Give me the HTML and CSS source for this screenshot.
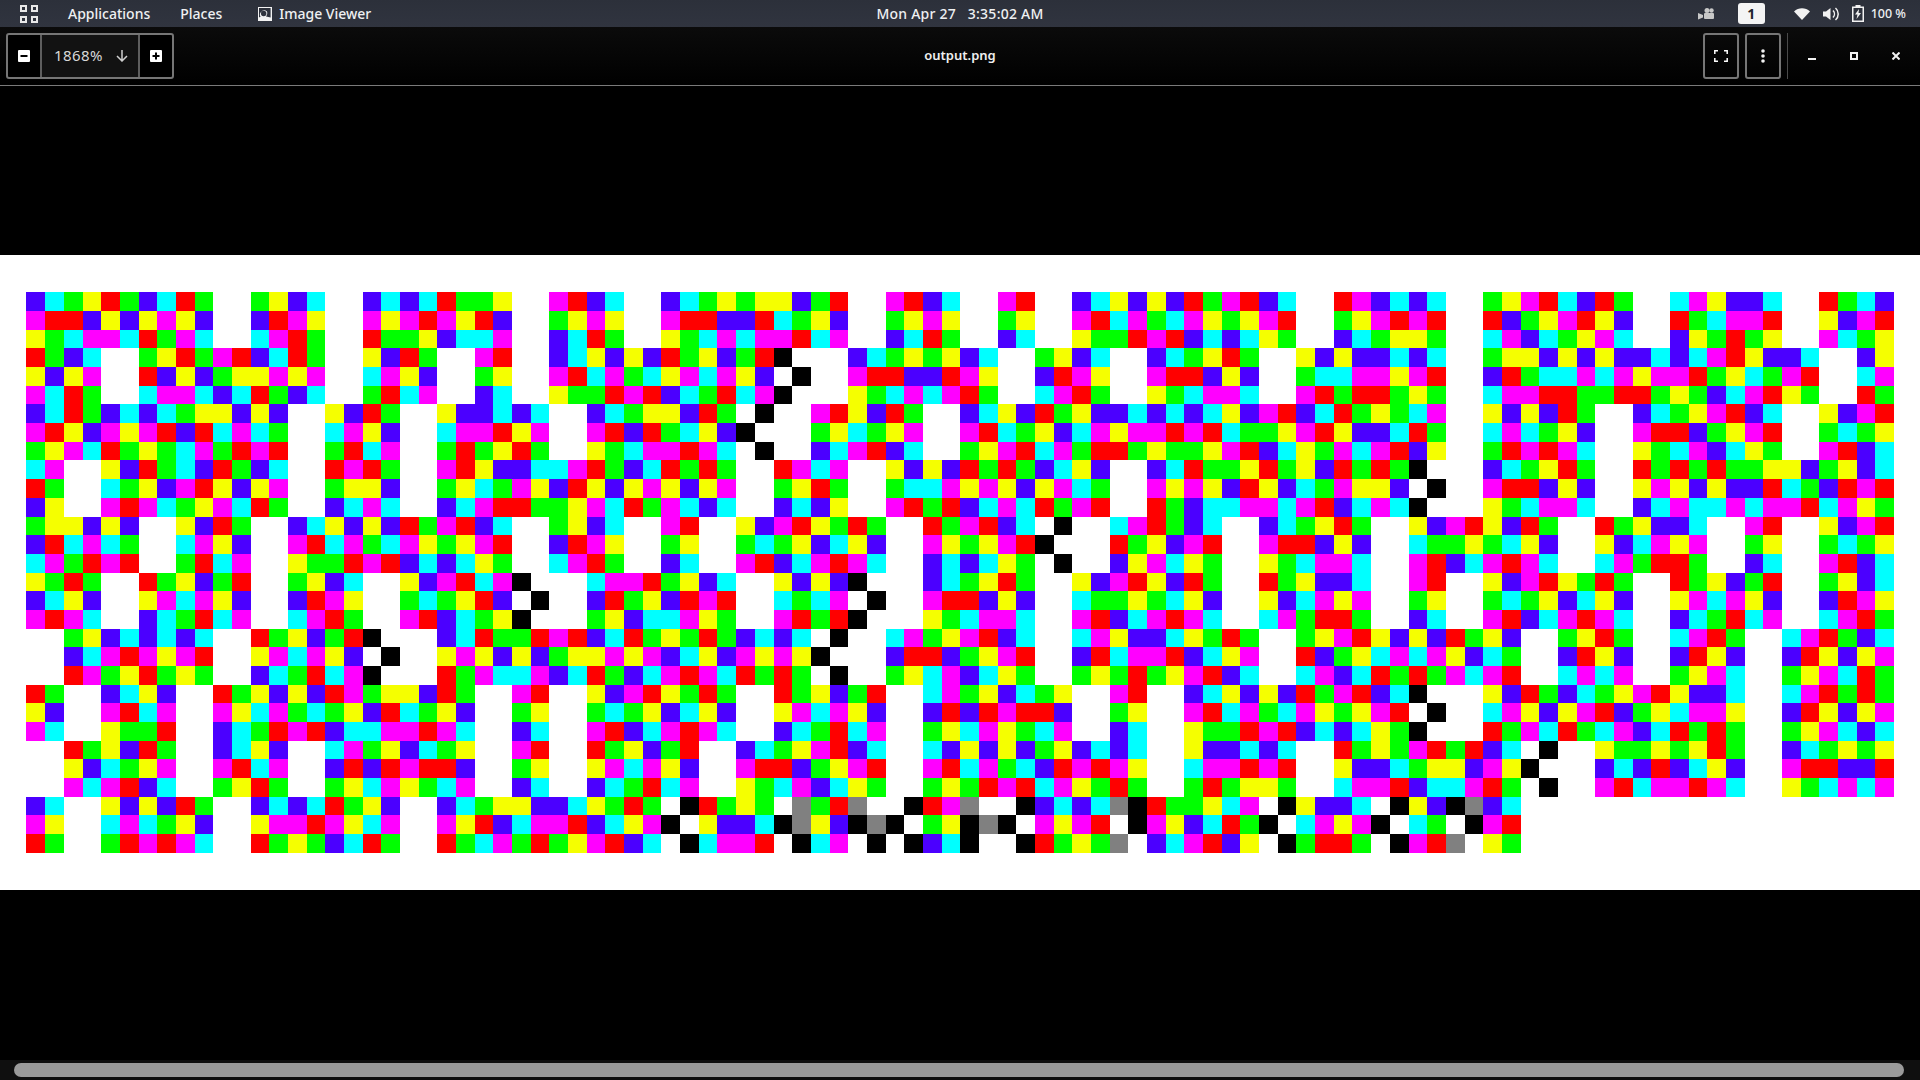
FILE: index.html
```html
<!DOCTYPE html>
<html lang="en">
<head>
<meta charset="utf-8">
<title>output.png</title>
<link rel="stylesheet" href="styles.css">
</head>
<body>
<div class="desktop">
  <header class="topbar">
    <div class="topbar-left">
      <svg class="activities" width="18" height="18" viewBox="0 0 18 18" fill="none" stroke="#e8e8e8" stroke-width="2"><rect x="1" y="1" width="5" height="5"/><rect x="12" y="1" width="5" height="5"/><rect x="1" y="12" width="5" height="5"/><rect x="12" y="12" width="5" height="5"/></svg>
      <span class="menu-item applications">Applications</span>
      <span class="menu-item places">Places</span>
      <svg class="app-icon" width="14" height="14" viewBox="0 0 14 14"><path fill="#f2f2f2" fill-rule="evenodd" d="M0 0h14v14H0zM1 1v9.5c.6-.3 1.2-.5 1.6-.7A4.2 4.2 0 0 1 9 4.5c.6 1.5.3 3.5-1 5l4.600 1V1zM3 6.500a2.700 2.700 0 0 0 2.700 2.800A2.700 2.700 0 0 0 8.400 6.500 2.700 2.700 0 0 0 5.700 3.800 2.700 2.700 0 0 0 3 6.500z"/></svg>
      <span class="menu-item">Image Viewer</span>
    </div>
    <div class="clock">Mon Apr 27 &nbsp; 3:35:02 AM</div>
    <div class="topbar-right">
      <svg class="tray-cam" width="16" height="14" viewBox="0 0 16 14" fill="#c8c8c8"><circle cx="9" cy="3.500" r="2.500"/><circle cx="13.500" cy="3.500" r="2.200"/><rect x="6" y="6" width="10" height="6" rx="1"/><path d="M0 6l5 2v2.500l-5 2z"/></svg>
      <span class="workspace">1</span>
      <svg class="tray-wifi" width="16" height="12" viewBox="0 0 16 12"><path fill="#f2f2f2" d="M0 3.500C4.500-.8 11.500-.8 16 3.500L8 12z"/></svg>
      <svg class="tray-vol" width="16" height="14" viewBox="0 0 16 14" fill="none"><path fill="#f2f2f2" d="M0 4.500h3L7.500 1v12L3 9.500H0z"/><path stroke="#f2f2f2" stroke-width="1.500" d="M10 3.500a5 5 0 0 1 0 7M12.500 1a8 8 0 0 1 0 12"/></svg>
      <svg class="tray-bat" width="12" height="17" viewBox="0 0 12 17"><path fill="#f2f2f2" fill-rule="evenodd" d="M3.500 0h5v1.500H12V17H0V1.500h3.500zM1.500 3v12.500h9V3z"/><path fill="#f2f2f2" d="M7 4L3 9.500h2.500L4.500 14 9 8H6.500z"/></svg>
      <span class="battery-text">100 %</span>
    </div>
  </header>

  <div class="headerbar">
    <div class="zoom-group">
      <button class="zoom-btn">
        <svg width="12" height="12" viewBox="0 0 12 12"><path fill="#fff" fill-rule="evenodd" d="M1 0h10a1 1 0 0 1 1 1v10a1 1 0 0 1-1 1H1a1 1 0 0 1-1-1V1a1 1 0 0 1 1-1zM2.500 5v2h7V5z"/></svg>
      </button>
      <div class="zoom-level">
        <span class="zoom-value">1868%</span>
        <svg width="12" height="12" viewBox="0 0 12 12" fill="none" stroke="#cfcfcf" stroke-width="1.500"><path d="M6 0v11M1 6l5 5 5-5"/></svg>
      </div>
      <button class="zoom-btn">
        <svg width="12" height="12" viewBox="0 0 12 12"><path fill="#fff" fill-rule="evenodd" d="M1 0h10a1 1 0 0 1 1 1v10a1 1 0 0 1-1 1H1a1 1 0 0 1-1-1V1a1 1 0 0 1 1-1zM5 2.500V5H2.500v2H5v2.500h2V7h2.500V5H7V2.500z"/></svg>
      </button>
    </div>
    <div class="title">output.png</div>
    <div class="header-actions">
      <button class="tool-btn">
        <svg width="14" height="12" viewBox="0 0 14 12" fill="none" stroke="#fff" stroke-width="1.500"><path d="M.8 4V.8H4M10 .8h3.200V4M13.200 8v3.200H10M4 11.200H.8V8"/></svg>
      </button>
      <button class="tool-btn">
        <svg width="4" height="14" viewBox="0 0 4 14" fill="#f2f2f2"><circle cx="2" cy="2" r="1.800"/><circle cx="2" cy="7" r="1.800"/><circle cx="2" cy="12" r="1.800"/></svg>
      </button>
      <span class="header-sep"></span>
      <div class="window-controls">
        <svg width="8" height="8" viewBox="0 0 8 8"><rect y="6" width="8" height="2" fill="#f2f2f2"/></svg>
        <svg width="8" height="8" viewBox="0 0 8 8" fill="none" stroke="#f2f2f2" stroke-width="2"><rect x="1" y="1" width="6" height="6"/></svg>
        <svg width="8" height="8" viewBox="0 0 8 8" fill="none" stroke="#f2f2f2" stroke-width="2"><path d="M.5.5l7 7M7.500.5l-7 7"/></svg>
      </div>
    </div>
  </div>

  <main class="viewer">
    <canvas id="picture" class="picture" width="1920" height="635"></canvas>
  </main>

  <div class="scrollbar"><div class="scroll-thumb"></div></div>
</div>
<script src="image.js"></script>
</body>
</html>
```
FILE: styles.css
```css
* { box-sizing: border-box; }
html, body { margin: 0; height: 100%; background: #000; overflow: hidden; }
body { font-family: "Noto Sans", "Open Sans", sans-serif; color: #f2f2f2; }

.desktop { display: flex; flex-direction: column; height: 1080px; width: 1920px; }

.topbar {
  height: 27px;
  flex: none;
  display: grid;
  grid-template-columns: 1fr auto 1fr;
  align-items: center;
  background: linear-gradient(#2c303a, #30343f);
  font-size: 14px;
  font-weight: 500;
  color: #eef0f2;
}
.topbar-left { display: flex; align-items: center; padding-left: 20px; }
.activities { margin-right: 30px; }
.applications { margin-right: 30px; }
.places { margin-right: 36px; }
.app-icon { margin-right: 7px; }
.menu-item { white-space: nowrap; }
.clock { white-space: pre; letter-spacing: .25px; }
.topbar-right { display: flex; align-items: center; justify-content: flex-end; padding-right: 14px; }
.tray-cam { margin-right: 24px; }
.workspace {
  width: 27px; height: 21px; margin-right: 29px;
  background: #f4f4f4; color: #22252c; border-radius: 3px;
  font-weight: 700; font-size: 14px; text-align: center; line-height: 21px;
}
.tray-wifi { margin-right: 13px; }
.tray-vol { margin-right: 13px; }
.tray-bat { margin-right: 7px; }
.battery-text { font-size: 12.500px; white-space: nowrap; }

.headerbar {
  height: 59px;
  flex: none;
  display: grid;
  grid-template-columns: 1fr auto 1fr;
  align-items: center;
  background: linear-gradient(#0b0b0b, #000);
  border-bottom: 1px solid #7a7a7a;
  font-size: 15px;
}
.zoom-group {
  display: flex; width: 168px; height: 46px; margin-left: 6px;
  border: 2px solid #767676; border-radius: 3px;
  justify-self: start; background: #000;
}
button { font: inherit; color: inherit; background: none; padding: 0; display: flex; align-items: center; justify-content: center; }
.zoom-btn { width: 32px; border: 0; }
.zoom-level {
  flex: 1; display: flex; align-items: center; justify-content: space-between;
  padding: 0 10px 0 12px;
  background: #121212; color: #d8d8d8;
  border-left: 2px solid #5e5e5e; border-right: 2px solid #5e5e5e;
  letter-spacing: .4px;
}
.zoom-value { padding-bottom: 2px; }
.title { font-weight: 600; font-size: 13px; color: #f0f0f0; padding-bottom: 2px; }
.header-actions { display: flex; align-items: center; justify-content: flex-end; }
.tool-btn { width: 36px; height: 46px; margin-right: 6px; border: 2px solid #767676; border-radius: 3px; }
.header-sep { width: 1px; height: 46px; background: #4a4a4a; }
.window-controls { display: flex; align-items: center; width: 132px; justify-content: space-between; padding: 0 20px; }

.viewer {
  flex: 1; min-height: 0;
  display: flex; align-items: center; justify-content: center;
  background: #000; overflow: hidden;
}
.picture { flex: none; width: 1920px; height: 635px; margin-bottom: 1px; display: block; }

.scrollbar { height: 20px; flex: none; background: #0f0f0f; padding: 3px 16px 3px 14px; }
.scroll-thumb { height: 14px; background: #9a9a9a; border-radius: 7px; }
```
FILE: image.js
```js
var COLORS = { B: "#4b00ff", C: "#00ffff", G: "#00ff00", Y: "#f5ff00", R: "#ff0000", M: "#ff00ff", K: "#000000", A: "#808080", W: "#ffffff" };
var ROWS = [
"BCGYRGBCRGWWGYBCWWBCBCRGGY WWMRBCWWBCGYGYYBGRWWMRBCW WMRWWBCYBYBRGMRBCWWRMBCBC WWGYMRCBRGWWCMYBBCWWRGCB",
"MRRBYBYMYBWWBRMYWWMYMRMYRB WWGYMYWWMRRBBRCGYBWWGYMYW WGYWWMRCMGCMYGYMRWWGYMRMR WWRBGYMRYBWWRGCMMRWWYBMR",
"YGCMMCRGMCWWCMRGWWRGGYBCCM WWBCRGWWYGCMCMMRCMWWBCRGW WBCWWYGGRMRBCBCYGWWBCGYYG WWCMBCGYMCWWBYGRGYWWMCGY",
"RGBCWWGYRGMRBCRGWWYBRGWWMR WWBCYBYBRGYBGRKWWWBCGYGYB CWWGYBCWWBCGYRGWWYBYBBCBC WWGYYBYBYBBCBCMRYBBCWWBY",
"YBYMWWRBYBGYYMYMWWCMYBWWGY WWMRCMGCYMCMYBWKWWMRRBBRM YWWBRMYWWMRRBYBWWGCCMMYMR WWBRGCCMCMYMMRGYCGMRWWCM",
"MCRGWWCMMCBCRGBCWWGRCMWWBC WWYGGRMRBCGRCMKWWWYGCMCMR GWWCMRGWWYGCMMCWWMRGRRGYG WWCMMRRGGRRGYGBCMRYGWWRG",
"BCRGBCBCGYYBYBWWYBRGWWYBBC BCWWBCGYYBRGWKWWMRYBRGWWB CYBRGYBBCBCBCYBMRBCRGYGCM WWYBYBRGWWBCGYMRBCWWYBMR",
"MRYBMYMRBRCMCGWWCMYBWWCMMR YMWWMRBRGCYBKWWWGYCGYMWWM RCGYBCMYMMRMRCGGYMRYBBCRG WWCMCGYBWWMRRBGYMRWWGCGY",
"GYMCRGYGCMGRMRWWGRCMWWGRGY RGWWYGCMMRMCWKWWBCMRBCWWG YMRCMGRRGYGGYMRBCYGMCMRBY WWGRMRMCWWYGCMBCYGWWMRBC",
"CMWWYBRGCBRGBCWWRMRGWWMRYB BCCMRGBCRGRGWWRMCMWWYBYBR GRGBCYBWWBCRGGYRGYBRGRGKW WWBCGYRGWWRGRGRGGYYBGYBC",
"RGWWCGYBMRYBYMWWGYYBWWGYCG MYBRYBYMYBYMWWGYRGWWGCCMY MYBYMCGWWMYMYBRYBCGMYYBWK WWMRRBYBWWYMYBYBBRCGBRMR",
"BYWWMRMCGYMCRGWWBCMCWWBCMR RGGYMCRGMCBCWWBCBYWWMRGRB CMCRGMRWWRGBCCMMCMRBCMCKW WWYGCMMCWWBCMCCMCMMRCMYG",
"GYYBYBWWYBRGWWBCYBYBRGMRBC WWGYBCWWMRWWYBMRYGRGWWRGM RBCWKWWCMRGBCWWBCGYRGWWYB MRYBRGWWRGYBBCWWMRWWYBMR",
"BRCMCGWWCMYBWWMRCMGCMYGYMR WWBRMYWWGYWWGCGYBCYBWWMYG YMRKWWWRGYBMRWWMRRBYBWWCG GYGCYBWWYBCMYMWWGYWWGCGY",
"CMGRMRWWGRCMWWYGGRMRBCBCYG WWCMRGWWBCWWMRBCMRMCWWBCB CYGWKWWBYMCYGWWYGCMMCWWMR BCMRMCWWCMGRRGWWBCWWMRBC",
"YGRGWWRGYBGRWWGYBCWWYBMRCM KWWWCMMRGYBCWWYBYBKWWWBCG YRGWWYBMRYBRGWWRGYBBCWWMR WWYBMRYGRGWWRGYBGRWWGYBC",
"BCYBWWYMCMYBWWBRMYWWGCGYRB WKWWBRGYBRMRWWCGCMWKWWMRR BYBWWCGGYGCYBWWYBCMYMWWGY WWGCGYBCYBWWYMCMYBWWBRMY",
"MRMCWWBCGRCMWWCMRGWWMRBCGY KWWWGYBCCMYGWWMRGRKWWWYGC MMCWWMRBCMRMCWWCMGRRGWWBC WWMRBCMRMCWWBCGRCMWWCMRG",
"WWGYBCBCBCWWRGYBGRKWWWBCRG GRMRBCRGYGRGBCBCWKWWCMGYM RBCWWCMYBBCYGRGWWGYMRYBYB RGYBWWGYRGWWCMRGWWCMRGBC",
"WWBCMRMYMRWWYMCMYBWKWWYMYB YBGYYMYMBCYBMYMYKWWWBRRBG YMRWWBRCMMRBCYMWWRBGYCMCM YBCGWWBRYBWWBRYBWWBRYBYM",
"WWRMGYRGYGWWBCGRCMKWWWRGMC CMBCRGBCMRMCRGRGWKWWGYCMB CYGWWGYGRGYMRBCWWCMBCRGRG MCMRWWCMCMWWGYMCWWGYMCRG",
"RGWWBCYBWWRGYBYBRMGYYBRGWW MRWWYBMRYGRGWWRGYBGRWWCMG YBCGYWWMRWWBCYBYBRGMRBCKW WWYBRGBCGYMRYBBCWWCMRGRG",
"YBWWMRCMWWMYCMGCGYBRCGYBWW GYWWGCGYBCYBWWYMCMYBWWBRB RMRRBWWGYWWMRCMGCMYGYMRWK WWCMYBYMRBGYCMMYWWBRYBYM",
"MCWWYGGRWWBCGRMRBCCMMRMCWW BCWWMRBCMRMCWWBCGRCMWWGYC MYGCMWWBCWWYGGRMRBCBCYGKW WWRGMCRGCMBCRGRGWWGYMCBC",
"WWRGYBRGWWBCYBWWCMGYBCGYWW MRWWRGYBGRWWBCGYMRBCWWCBY BYBGYBCBCWWYBBCBCWWRGYGMR GRBCWKWWYGGYGYRGWWBCGYGY",
"WWYBCGYMWWMRCMWWBRBRMRRBWW GYWWYMCMYBWWMRRBGYMRWWMRC MGCBRMRMYWWCMMRMRWWYBBCGY YBMYKWWWBCBRBCYBWWMRRBBR",
"WWMCMRBCWWGYRGWWGYCMYGCMWW BCWWBCGRCMWWYGCMBCYGWWGYG RMRCMYGRGWWGRGYYGWWCMMRBC CMRGWKWWMRCMMRMCWWYGCMCM",
"BCWWYBYBRGWWBCBCRGYBWWBCGY YBBCYGRGWKRGYGWAGRAWWKRMA WWKBCBCAKRGGYCMWKYBBCWKYB KABC",
"MYWWCMCGYBWWYMMRMYCMWWMYRB CMMRBCYMKWYBBCKAYBKAKWGYK AKWMYMRWKMYBCRGKWCMYMKWCG WKMR",
"RGWWGRMRMCWWRGYGBCRGWWRGCM GRGYMRBCWKCMMRWKCMWKWKBCK WWKRGYGAWBCMRBYWKGRRGWKMR AWYG"
];
/* About 1868% zoom: one image pixel is about 18.68 screen pixels, snapped to whole screen pixels */
var SCALE_X = 18.676, SCALE_Y = 18.68, LEFT = 26.48, TOP = 37.36;
var ctx = document.getElementById("picture").getContext("2d");
ctx.fillStyle = COLORS.W;
ctx.fillRect(0, 0, 1920, 635);
ROWS.forEach(function (row, y) {
  var y0 = Math.round(TOP + SCALE_Y * y), y1 = Math.round(TOP + SCALE_Y * (y + 1));
  row.replace(/ /g, "").split("").forEach(function (c, x) {
    var x0 = Math.round(LEFT + SCALE_X * x), x1 = Math.round(LEFT + SCALE_X * (x + 1));
    ctx.fillStyle = COLORS[c];
    ctx.fillRect(x0, y0, x1 - x0, y1 - y0);
  });
});
```
